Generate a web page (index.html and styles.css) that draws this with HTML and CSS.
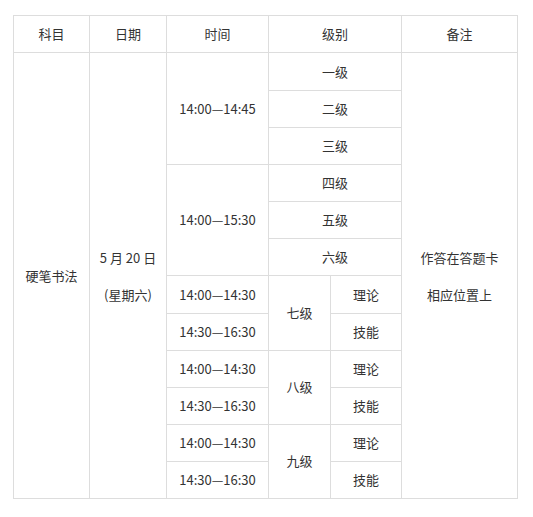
FILE: index.html
```html
<!DOCTYPE html>
<html lang="zh-CN">
<head>
<meta charset="utf-8">
<link rel="stylesheet" href="styles.css">
</head>
<body>
<div class="wrap">
<table class="sched">
  <colgroup>
    <col class="c1"><col class="c2"><col class="c3"><col class="c4"><col class="c5"><col class="c6">
  </colgroup>
  <thead>
    <tr><th>科目</th><th>日期</th><th>时间</th><th colspan="2">级别</th><th>备注</th></tr>
  </thead>
  <tbody>
    <tr class="first">
      <td rowspan="12">硬笔书法</td>
      <td rowspan="12"><p>5 月 20 日</p><p>(星期六)</p></td>
      <td rowspan="3">14:00—14:45</td>
      <td colspan="2">一级</td>
      <td rowspan="12"><p>作答在答题卡</p><p>相应位置上</p></td>
    </tr>
    <tr><td colspan="2">二级</td></tr>
    <tr><td colspan="2">三级</td></tr>
    <tr><td rowspan="3">14:00—15:30</td><td colspan="2">四级</td></tr>
    <tr><td colspan="2">五级</td></tr>
    <tr><td colspan="2">六级</td></tr>
    <tr><td>14:00—14:30</td><td rowspan="2">七级</td><td>理论</td></tr>
    <tr><td>14:30—16:30</td><td>技能</td></tr>
    <tr><td>14:00—14:30</td><td rowspan="2">八级</td><td>理论</td></tr>
    <tr><td>14:30—16:30</td><td>技能</td></tr>
    <tr><td>14:00—14:30</td><td rowspan="2">九级</td><td>理论</td></tr>
    <tr><td>14:30—16:30</td><td>技能</td></tr>
  </tbody>
</table>
</div>
</body>
</html>
```
FILE: styles.css
```css
html, body { margin: 0; padding: 0; background: #fff; }
.wrap { padding: 15px 0 0 13px; }
.sched {
  border-collapse: collapse;
  table-layout: fixed;
  width: 504px;
  font-family: "Noto Sans CJK SC", "Noto Sans", sans-serif;
  font-size: 13px;
  color: #333;
}
.c1 { width: 76px; }
.c2 { width: 77px; }
.c3 { width: 102px; }
.c4 { width: 62px; }
.c5 { width: 71px; }
.c6 { width: 116px; }
.sched th, .sched td {
  border: 1px solid #ddd;
  height: 36.1px;
  padding: 0;
  text-align: center;
  vertical-align: middle;
  font-weight: normal;
  line-height: 20px;
}
.sched th { height: 36px; }
.sched .first td { height: 37px; }
.sched p { margin: 0; line-height: 37px; }
```
